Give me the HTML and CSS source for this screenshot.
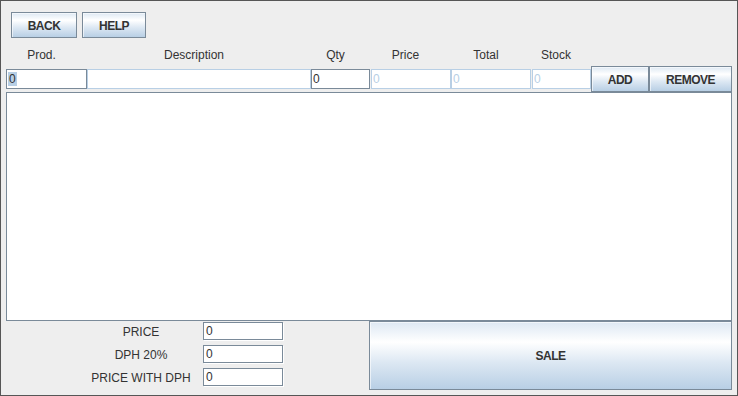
FILE: index.html
```html
<!DOCTYPE html>
<html>
<head>
<meta charset="utf-8">
<link rel="stylesheet" href="styles.css">
</head>
<body>
<div class="frame">
  <div class="toolbar">
    <button class="btn btn-back">BACK</button>
    <button class="btn btn-help">HELP</button>
  </div>
  <div class="cols labels">
    <span class="lbl">Prod.</span>
    <span class="lbl">Description</span>
    <span class="lbl">Qty</span>
    <span class="lbl">Price</span>
    <span class="lbl">Total</span>
    <span class="lbl">Stock</span>
    <span></span>
    <span></span>
  </div>
  <div class="cols entry">
    <div class="field dark"><span class="sel">0</span></div>
    <div class="field light"></div>
    <div class="field dark">0</div>
    <div class="field light off shift">0</div>
    <div class="field light off">0</div>
    <div class="field light off shift">0</div>
    <button class="btn btn-add">ADD</button>
    <button class="btn btn-remove">REMOVE</button>
  </div>
  <div class="table"></div>
  <div class="bottom">
    <div class="totals">
      <span class="tlabel">PRICE</span>
      <div class="tfield">0</div>
      <span class="tlabel">DPH 20%</span>
      <div class="tfield">0</div>
      <span class="tlabel">PRICE WITH DPH</span>
      <div class="tfield">0</div>
    </div>
    <button class="btn btn-sale">SALE</button>
  </div>
</div>
</body>
</html>
```
FILE: styles.css
```css
* { box-sizing: border-box; }
html, body { margin: 0; padding: 0; background: #eeeeee; }
body { font-family: "Liberation Sans", Arial, sans-serif; color: #333333; }

.frame {
  width: 738px;
  height: 396px;
  border: 1px solid #565656;
  background: #eeeeee;
  display: flex;
  flex-direction: column;
}

.btn {
  margin: 0;
  padding: 1px 0 0 0;
  border: 1px solid #7a8a99;
  background: linear-gradient(#dde8f3 0%, #ffffff 30%, #dde8f3 60%, #b8cfe5 100%);
  font-family: "Liberation Sans", Arial, sans-serif;
  font-weight: bold;
  font-size: 12px;
  letter-spacing: -0.5px;
  color: #333333;
  box-shadow: inset 1px 1px 0 rgba(255,255,255,0.6);
  cursor: default;
}

.toolbar {
  display: flex;
  gap: 5px;
  padding: 11px 0 0 10px;
  height: 37px;
}
.btn-back { width: 66px; height: 26px; }
.btn-help { width: 64px; height: 26px; }

.cols {
  display: grid;
  grid-template-columns: 81px 224px 59px 81px 80px 60px 58px 83px;
  margin: 0 5px;
}

.labels {
  height: 28px;
  padding-top: 10px;
}
.lbl {
  font-size: 12px;
  line-height: 14px;
  text-align: center;
  padding-right: 10px;
}

.entry {
  height: 26px;
  align-items: center;
}
.field {
  height: 20px;
  background: #ffffff;
  font-size: 12px;
  line-height: 18px;
  padding-left: 1px;
  color: #333333;
}
.field.dark { border: 1px solid #7a8a99; }
.field.light { border: 1px solid #b8cfe5; }
.field.off { color: #b8cfe5; }
.field.shift { margin-left: 1px; }
.sel { background: #b8cfe5; padding: 0 1px; }

.btn-add, .btn-remove { height: 26px; align-self: start; }

.table {
  height: 229px;
  margin: 0 5px;
  background: #ffffff;
  border: 1px solid #7a8a99;
}

.bottom {
  display: flex;
  height: 69px;
  margin: 0 5px;
}
.totals {
  width: 363px;
  display: grid;
  grid-template-columns: 110px 80px;
  grid-auto-rows: 19px;
  column-gap: 7px;
  row-gap: 4px;
  padding: 1px 0 0 80px;
  align-content: start;
}
.tlabel {
  font-size: 12px;
  line-height: 19px;
  padding-top: 1px;
  text-align: center;
}
.tfield {
  width: 80px;
  height: 18px;
  background: #ffffff;
  border: 1px solid #7a8a99;
  box-shadow: 1px 1px 0 #ffffff;
  font-size: 12px;
  line-height: 16px;
  padding-left: 2px;
}
.btn-sale {
  width: 363px;
  height: 69px;
}
```
